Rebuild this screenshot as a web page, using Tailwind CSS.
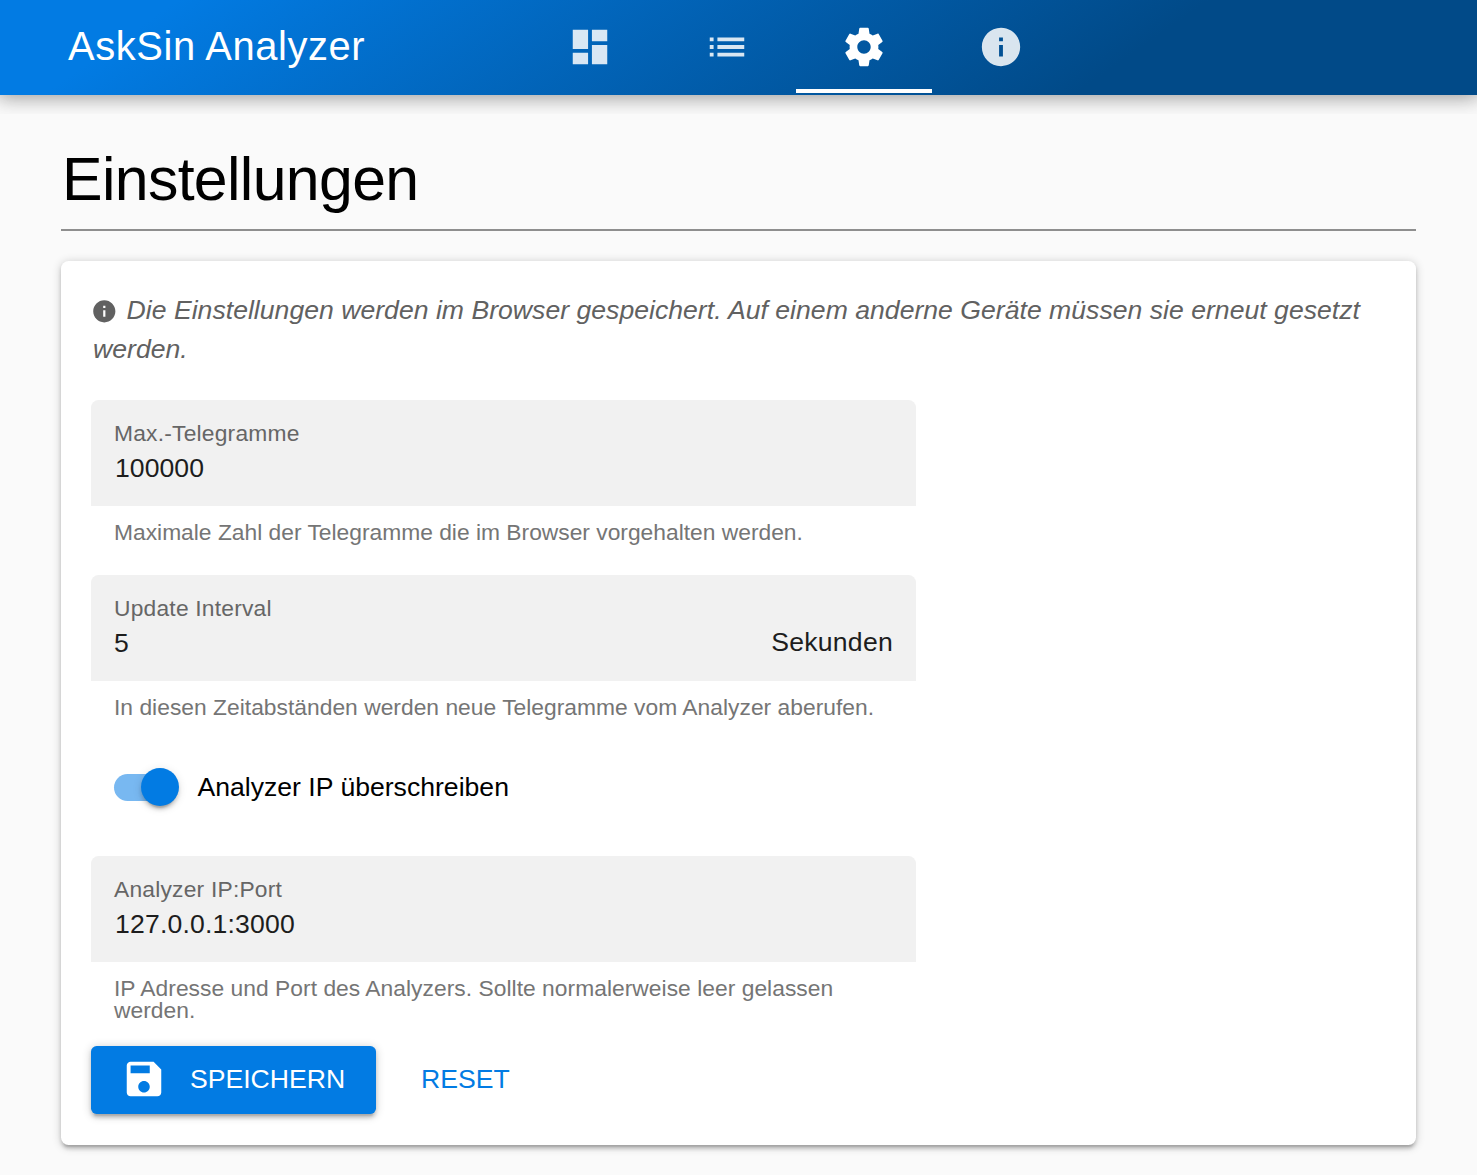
<!DOCTYPE html>
<html lang="de">
<head>
<meta charset="utf-8">
<title>AskSin Analyzer</title>
<script src="https://cdn.jsdelivr.net/npm/@tailwindcss/browser@4"></script>
</head>
<body class="h-[1175px] overflow-hidden bg-[#fafafa] font-['Liberation_Sans',Arial,sans-serif] text-[26.6px] leading-[40px] text-black">
<div class="h-[114px] overflow-hidden">
  <header class="flex h-[95px] bg-[linear-gradient(145deg,#027be3_11%,#014a88_75%)] pl-[68px] text-white shadow-[0_0_19px_3.8px_rgba(0,0,0,0.2),0_0_19px_rgba(0,0,0,0.24)]">
    <div class="flex w-[454px] items-center pb-[4px] text-[39.9px] tracking-[0.6px]">AskSin Analyzer</div>
    <nav class="flex">
      <a class="flex w-[136.8px] items-center justify-center pb-px"><svg class="size-[46px] opacity-85" viewBox="0 0 24 24" fill="currentColor"><path d="M3 13h8V3H3v10zm0 8h8v-6H3v6zm10 0h8V11h-8v10zm0-18v6h8V3h-8z"/></svg></a>
      <a class="flex w-[136.8px] items-center justify-center pb-px"><svg class="size-[46px] opacity-85" viewBox="0 0 24 24" fill="currentColor"><path d="M3 13h2v-2H3v2zm0 4h2v-2H3v2zm0-8h2V7H3v2zm4 4h14v-2H7v2zm0 4h14v-2H7v2zM7 7v2h14V7H7z"/></svg></a>
      <a class="relative flex w-[136.8px] items-center justify-center pb-px"><svg class="size-[46px]" viewBox="0 0 24 24" fill="currentColor"><path d="M19.43 12.98c.04-.32.07-.64.07-.98s-.03-.66-.07-.98l2.11-1.65c.19-.15.24-.42.12-.64l-2-3.46c-.12-.22-.39-.3-.61-.22l-2.49 1c-.52-.4-1.08-.73-1.69-.98l-.38-2.65C14.46 2.18 14.25 2 14 2h-4c-.25 0-.46.18-.49.42l-.38 2.65c-.61.25-1.17.59-1.69.98l-2.49-1c-.23-.09-.49 0-.61.22l-2 3.46c-.13.22-.07.49.12.64l2.11 1.65c-.04.32-.07.65-.07.98s.03.66.07.98l-2.11 1.65c-.19.15-.24.42-.12.64l2 3.46c.12.22.39.3.61.22l2.49-1c.52.4 1.08.73 1.69.98l.38 2.65c.03.24.24.42.49.42h4c.25 0 .46-.18.49-.42l.38-2.65c.61-.25 1.17-.59 1.69-.98l2.49 1c.23.09.49 0 .61-.22l2-3.46c.12-.22.07-.49-.12-.64l-2.11-1.65zM12 15.5c-1.93 0-3.5-1.57-3.5-3.5s1.57-3.5 3.5-3.5 3.5 1.57 3.5 3.5-1.57 3.5-3.5 3.5z"/></svg><span class="absolute inset-x-0 bottom-[2px] h-[4px] bg-white"></span></a>
      <a class="flex w-[136.8px] items-center justify-center pb-px"><svg class="size-[46px] opacity-85" viewBox="0 0 24 24" fill="currentColor"><path d="M12 2C6.48 2 2 6.48 2 12s4.480 10 10 10 10-4.480 10-10S17.520 2 12 2zm1 15h-2v-6h2v6zm0-8h-2V7h2v2z"/></svg></a>
    </nav>
  </header>
</div>
<main class="mx-[61px]">
  <h1 class="h-[117px] border-b-2 border-[#8e8e8e] pt-[30px] pl-px text-[60.8px] leading-[70px] tracking-[-0.66px]">Einstellungen</h1>
  <section class="mt-[30px] h-[884px] rounded-[7.6px] bg-white px-[30px] pt-[30px] shadow-[0_1.9px_9.5px_rgba(0,0,0,0.2),0_3.8px_3.8px_rgba(0,0,0,0.14),0_5.7px_1.9px_-3.8px_rgba(0,0,0,0.12)]">
    <p class="h-[109px] pl-[2px] leading-[39px] tracking-[0.015px] text-[#616161] italic"><svg class="mr-[9px] inline-block size-[26.6px] -ml-[2px] align-[-6px]" viewBox="0 0 24 24" fill="currentColor"><path d="M12 2C6.480 2 2 6.480 2 12s4.480 10 10 10 10-4.480 10-10S17.520 2 12 2zm1 15h-2v-6h2v6zm0-8h-2V7h2v2z"/></svg>Die Einstellungen werden im Browser gespeichert. Auf einem anderne Geräte müssen sie erneut gesetzt werden.</p>
    <div class="w-[825px]">
      <div class="h-[106px] rounded-t-[7.6px] bg-[#f1f1f1] px-[23px] pt-[18px]">
        <div class="text-[22.8px] leading-[30px] tracking-[0.21px] text-[#666]">Max.-Telegramme</div>
        <div class="pl-px leading-[40px] tracking-[0.05px] text-[#1d1d1d]">100000</div>
      </div>
      <div class="h-[69px] px-[23px] pt-[15px] text-[22.8px] leading-[22.8px] text-[#757575]">Maximale Zahl der Telegramme die im Browser vorgehalten werden.</div>
      <div class="h-[106px] rounded-t-[7.6px] bg-[#f1f1f1] px-[23px] pt-[18px]">
        <div class="text-[22.8px] leading-[30px] tracking-[0.21px] text-[#666]">Update Interval</div>
        <div class="flex justify-between leading-[40px] tracking-[0.25px] text-[#1d1d1d]"><span>5</span><span class="-mt-px">Sekunden</span></div>
      </div>
      <div class="h-[87px] px-[23px] pt-[15px] text-[22.8px] leading-[22.8px] tracking-[0.02px] text-[#757575]">In diesen Zeitabständen werden neue Telegramme vom Analyzer aberufen.</div>
      <div class="flex h-[88px] items-start pl-[23px]">
        <div class="flex h-[38px] w-[64.500px] items-center">
          <div class="h-[27px] w-[46px] shrink-0 rounded-full bg-[#78b8f1]"></div>
          <div class="-ml-[19.500px] size-[38px] shrink-0 rounded-full bg-[#027be3] shadow-[0_5.7px_1.9px_-3.8px_rgba(0,0,0,0.2),0_3.8px_3.8px_rgba(0,0,0,0.14),0_1.9px_9.5px_rgba(0,0,0,0.12)]"></div>
        </div>
        <span class="ml-[19px] leading-[38px]">Analyzer IP überschreiben</span>
      </div>
      <div class="h-[106px] rounded-t-[7.6px] bg-[#f1f1f1] px-[23px] pt-[18px]">
        <div class="text-[22.8px] leading-[30px] tracking-[0.21px] text-[#666]">Analyzer IP:Port</div>
        <div class="pl-px leading-[40px] tracking-[0.17px] text-[#1d1d1d]">127.0.0.1:3000</div>
      </div>
      <div class="h-[84px] px-[23px] pt-[15.400px] text-[22.8px] leading-[22px] tracking-[0.035px] text-[#757575]">IP Adresse und Port des Analyzers. Sollte normalerweise leer gelassen<br>werden.</div>
    </div>
    <div class="flex h-[68px] leading-[66px]">
      <button class="flex w-[285px] rounded-[5.7px] bg-[#027be3] pl-[30px] text-white shadow-[0_1.9px_9.5px_rgba(0,0,0,0.2),0_3.8px_3.8px_rgba(0,0,0,0.14),0_5.7px_1.9px_-3.8px_rgba(0,0,0,0.12)]"><svg class="mt-[10px] mr-[23px] size-[46px]" viewBox="0 0 24 24" fill="currentColor"><path d="M17 3H5c-1.110 0-2 .9-2 2v14c0 1.100.89 2 2 2h14c1.100 0 2-.9 2-2V7l-4-4zm-5 16c-1.660 0-3-1.340-3-3s1.340-3 3-3 3 1.340 3 3-1.340 3-3 3zm3-10H5V5h10v4z"/></svg>SPEICHERN</button>
      <button class="ml-[45px] flex text-[#027be3]">RESET</button>
    </div>
  </section>
</main>
</body>
</html>
